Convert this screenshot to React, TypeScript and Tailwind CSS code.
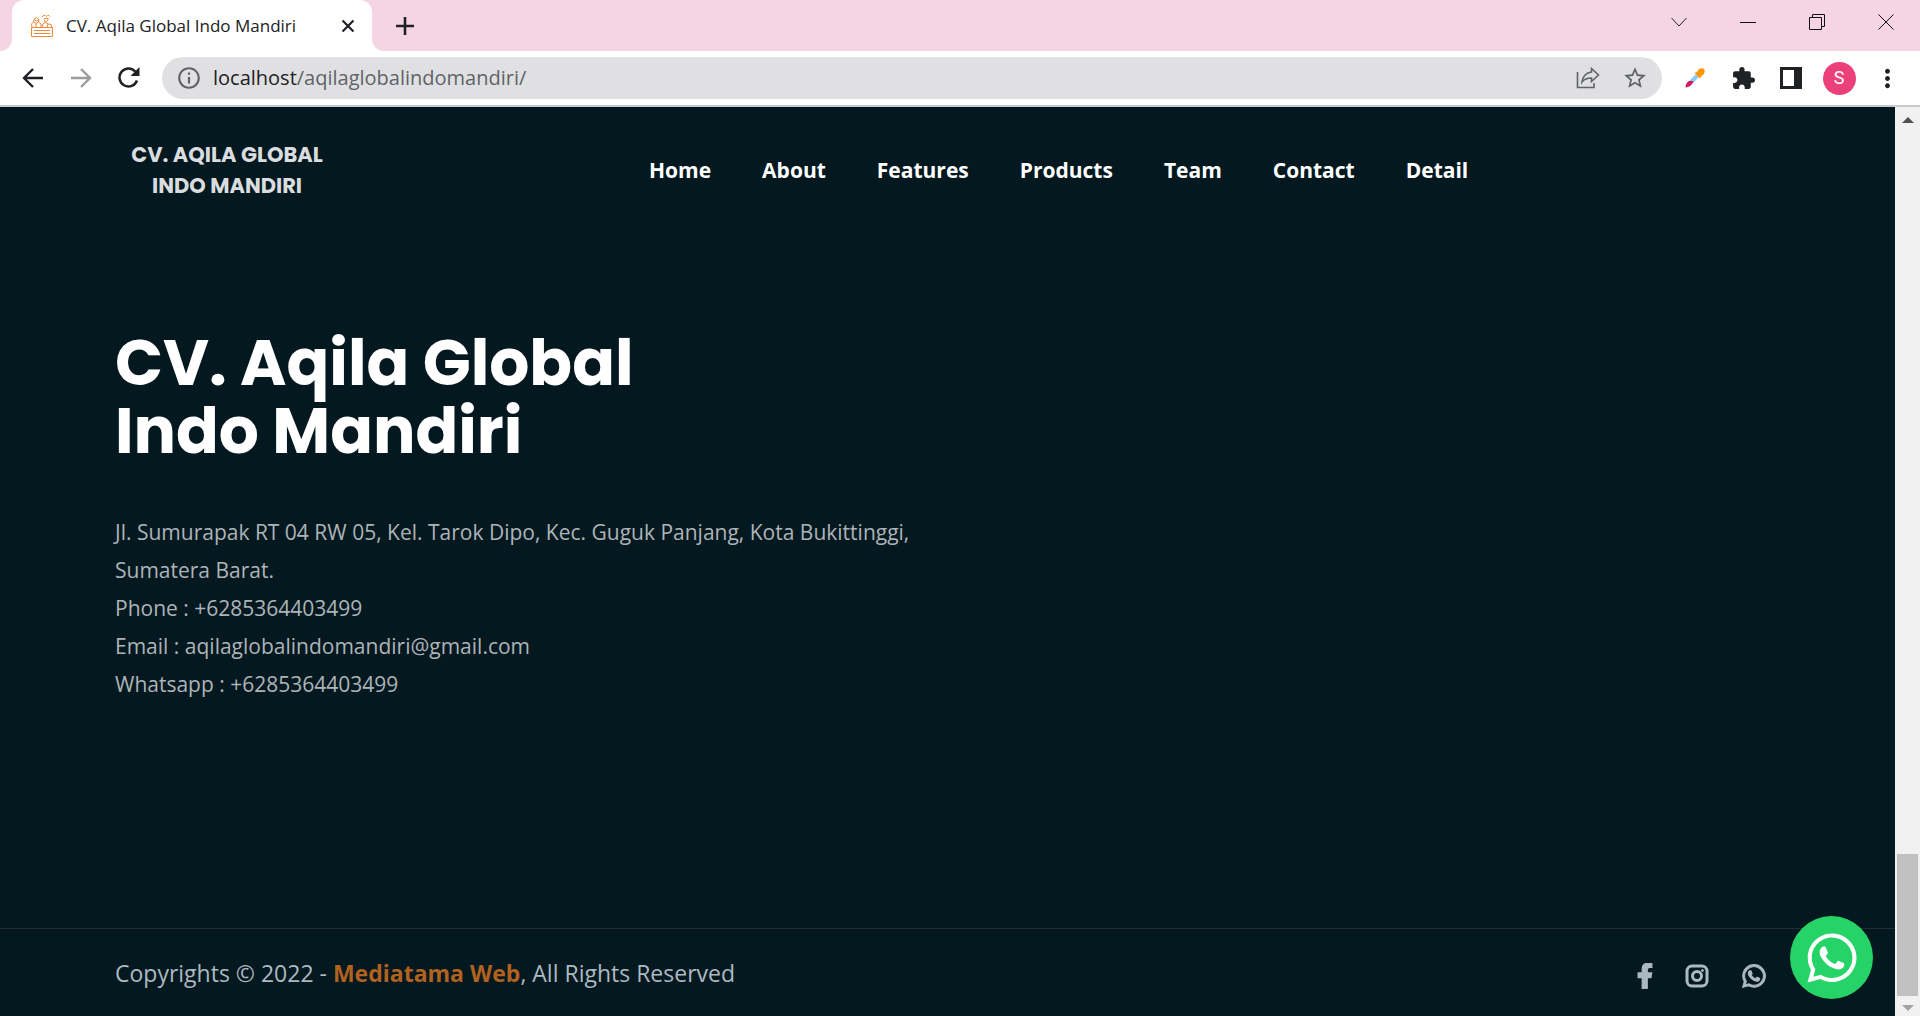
import React from "react";
import { FaFacebookF, FaWhatsapp } from "react-icons/fa";
import { MdExtension, MdStarBorder, MdMoreVert, MdOutlineInfo } from "react-icons/md";

const links = ["Home", "About", "Features", "Products", "Team", "Contact", "Detail"];

function CrateIcon() {
  return (
    <svg viewBox="0 0 24 24" className="size-6 shrink-0" fill="none" stroke="#f0883c" strokeWidth="1" aria-hidden="true">
      <path d="M1.500 13.500h21v9h-21zM4 16.500h16M4 19.500h16" />
      <path d="M2 13l-.5-3 2-2 2.500 1.500L8.500 8l2.500 2v3M6 9.500V13M3.500 8L4 5.500 6.500 3.500 9 5.500 8.500 8M4 5.500L6.500 7 9 5.500" />
      <path d="M12 13l1-3 2.500-1.500L18 10l3 .5 1 2.500M15.500 8.500L14 5.500M15.500 8.500L19 4.500M18 10l-1 3" />
      <path d="M12 3c1-2 3.500-2 4.500-.500C17.500 1 19 1 20 2.500M14 4.500h4" />
    </svg>
  );
}

function DropperIcon() {
  return (
    <svg viewBox="0 0 20 20" className="size-5" aria-hidden="true">
      <path d="M3 17L12 8" stroke="#90caf9" strokeWidth="4" strokeLinecap="round" />
      <path d="M.5 19.500c0-3 1.500-5.500 3.500-6.500h4.500c-1 3.500-4 6-8 6.500z" fill="#d81b60" />
      <path d="M9.500 5l5.500 5.500 1.500-2.500L18.500 6.500c1.500-2 1.500-4.500.5-5.500s-3.500-1-5.500.5L12 4z" fill="#ff9800" />
    </svg>
  );
}

function ShareIcon() {
  return (
    <svg viewBox="0 0 24 24" className="size-6" fill="none" stroke="currentColor" strokeWidth="1.600" aria-hidden="true">
      <path d="M1.500 6v15.500H18V17" />
      <path d="M15.500 2.500L22.500 9l-7 6.500V12c-4 0-7 .8-9.500 4 .5-5 4-9.500 9.500-10z" />
    </svg>
  );
}

function SidePanelIcon() {
  return (
    <svg viewBox="0 0 22 22" className="size-[22px]" aria-hidden="true">
      <path fill="#202124" fillRule="evenodd" d="M0 0h22v22H0zM3 3v16h11V3z" />
    </svg>
  );
}

function ArrowIcon({ flip = false }: { flip?: boolean }) {
  return (
    <svg viewBox="0 0 22 22" className="size-[22px]" fill="none" stroke="currentColor" strokeWidth="2.400" aria-hidden="true">
      <path d={flip ? "M1 11h19M11 2l9 9-9 9" : "M21 11H2M11 2l-9 9 9 9"} />
    </svg>
  );
}

function ReloadIcon() {
  return (
    <svg viewBox="0 0 22 22" className="size-[22px]" fill="none" stroke="currentColor" strokeWidth="2.500" aria-hidden="true">
      <path d="M19 13.500A9 9 0 1 1 17.500 4.800" />
      <path d="M21.500 0v9h-9z" fill="currentColor" stroke="none" />
    </svg>
  );
}

function InstagramIcon() {
  return (
    <svg viewBox="0 0 24 24" className="size-6" fill="none" stroke="currentColor" strokeWidth="3" aria-hidden="true">
      <rect x="2" y="2" width="20" height="20" rx="5" />
      <circle cx="12" cy="12" r="4.500" />
      <circle cx="17.500" cy="6.500" r="1" strokeWidth="1" fill="currentColor" />
    </svg>
  );
}

function TabStrip() {
  return (
    <div className="flex h-[51px] items-end bg-[#f5d4e3] text-[#202124]">
      <div className="size-3 bg-white">
        <div className="size-full rounded-br-xl bg-[#f5d4e3]" />
      </div>
      <div className="flex h-full w-[360px] items-center rounded-t-xl bg-white pr-3 pl-[18px]">
        <CrateIcon />
        <span className="ml-3 flex-1 truncate text-[17px]">CV. Aqila Global Indo Mandiri</span>
        <button aria-label="Close tab" className="grid size-6 place-items-center">
          <svg viewBox="0 0 12 12" className="size-3" fill="none" stroke="currentColor" strokeWidth="2.200"><path d="M.5.5l11 11M11.500.5l-11 11" /></svg>
        </button>
      </div>
      <div className="size-3 bg-white">
        <div className="size-full rounded-bl-xl bg-[#f5d4e3]" />
      </div>
      <button aria-label="New tab" className="grid h-full w-[42px] place-items-center">
        <svg viewBox="0 0 18 18" className="size-[18px]" fill="none" stroke="currentColor" strokeWidth="2.600"><path d="M9 0v18M0 9h18" /></svg>
      </button>
      <div className="ml-auto flex h-[43px] items-center self-start">
        <button aria-label="Search tabs" className="grid w-[69px] place-items-center">
          <svg viewBox="0 0 16 16" className="size-4" fill="none" stroke="#222"><path d="M.5 4L8 12l7.500-8" /></svg>
        </button>
        <button aria-label="Minimize" className="grid w-[69px] place-items-center">
          <svg viewBox="0 0 16 16" className="size-4" fill="none" stroke="#111"><path d="M0 8.500h16" /></svg>
        </button>
        <button aria-label="Restore" className="grid w-[69px] place-items-center">
          <svg viewBox="0 0 16 16" className="size-4" fill="none" stroke="#111"><path d="M.5 3.500h12v12H.5zM3.500 3.500v-3h12v12h-3" /></svg>
        </button>
        <button aria-label="Close window" className="grid w-[69px] place-items-center">
          <svg viewBox="0 0 16 16" className="size-4" fill="none" stroke="#111"><path d="M.5.5l15 15M15.500.5l-15 15" /></svg>
        </button>
      </div>
    </div>
  );
}

function Toolbar() {
  return (
    <div className="flex h-14 items-center gap-[9px] border-b-2 border-[#c8c9cb] bg-white px-[9px] text-[#202124]">
      <div className="flex">
        <button aria-label="Back" className="grid w-12 place-items-center"><ArrowIcon /></button>
        <button aria-label="Forward" className="grid w-12 place-items-center text-[#9b9c9e]"><ArrowIcon flip /></button>
        <button aria-label="Reload" className="grid w-12 place-items-center"><ReloadIcon /></button>
      </div>
      <div className="flex h-[42px] flex-1 items-center rounded-full bg-[#e0e0e2] px-[14px] text-[#5f6368]">
        <MdOutlineInfo className="size-[26px]" />
        <a href="#" className="ml-[11px] flex-1 text-xl"><span className="text-[#202124]">localhost</span>/aqilaglobalindomandiri/</a>
        <button aria-label="Share"><ShareIcon /></button>
        <button aria-label="Bookmark" className="ml-[22px]"><MdStarBorder className="size-[26px]" /></button>
      </div>
      <div className="flex items-center">
        <button aria-label="Color picker" className="grid w-12 place-items-center"><DropperIcon /></button>
        <button aria-label="Extensions" className="grid w-12 place-items-center"><MdExtension className="size-[25px]" /></button>
        <button aria-label="Side panel" className="grid w-12 place-items-center"><SidePanelIcon /></button>
        <button aria-label="Profile" className="grid w-12 place-items-center">
          <span className="grid size-[33px] place-items-center rounded-full bg-[#ec407a] font-[Roboto,sans-serif] text-lg text-white">S</span>
        </button>
        <button aria-label="Menu" className="grid w-12 place-items-center"><MdMoreVert className="size-[29px]" /></button>
      </div>
    </div>
  );
}

function ScrollBar() {
  return (
    <div className="flex w-[25px] shrink-0 flex-col items-center bg-[#f1f1f1]" aria-hidden="true">
      <svg viewBox="0 0 12 6" className="mt-2.5 h-1.5 w-3" fill="#505050"><path d="M0 6l6-6 6 6z" /></svg>
      <div className="flex-1" />
      <div className="h-[142px] w-[21px] bg-[#c1c1c1]" />
      <svg viewBox="0 0 12 6" className="mt-[9px] mb-[5px] h-1.5 w-3" fill="#a3a3a3"><path d="M0 0l6 6 6-6z" /></svg>
    </div>
  );
}

export default function App() {
  return (
    <div className="flex min-h-screen flex-col bg-[#041820] font-['Open_Sans','Noto_Sans',sans-serif]">
      <TabStrip />
      <Toolbar />
      <div className="flex flex-1">
        <div className="flex min-w-0 flex-1 flex-col">
          <header className="flex items-center pt-8 pl-[115px] text-[#d9dddf]">
            <a href="#" className="w-[224px] text-center font-[Poppins,Inter,sans-serif] text-[21px] leading-[31px] font-bold">CV. AQILA GLOBAL<br />INDO MANDIRI</a>
            <nav className="ml-[310px] flex gap-[51px] pt-0.5 text-[21px] font-bold text-white">
              {links.map((l) => <a key={l} href="#">{l}</a>)}
            </nav>
          </header>
          <main className="flex-1 pt-32 pl-[115px]">
            <h1 className="font-[Poppins,Inter,sans-serif] text-[63px] leading-[68px] font-bold text-white">CV. Aqila Global<br />Indo Mandiri</h1>
            <address className="mt-12 text-[21px] leading-[38px] text-[#adb4b8] not-italic">
              Jl. Sumurapak RT 04 RW 05, Kel. Tarok Dipo, Kec. Guguk Panjang, Kota Bukittinggi,<br />
              Sumatera Barat.<br />
              Phone : +6285364403499<br />
              Email : aqilaglobalindomandiri@gmail.com<br />
              Whatsapp : +6285364403499
            </address>
          </main>
          <footer className="flex h-[88px] items-center justify-between border-t border-[#222e34] pr-32 pl-[115px] text-[#adb9c0]">
            <p className="pt-0.5 text-[23px]">Copyrights © 2022 - <a href="#" className="font-bold text-[#b1621f]">Mediatama Web</a>, All Rights Reserved</p>
            <div className="mt-1.5 flex items-center gap-8">
              <a href="#" aria-label="Facebook"><FaFacebookF className="h-[26px] w-4" stroke="currentColor" strokeWidth="24" /></a>
              <a href="#" aria-label="Instagram"><InstagramIcon /></a>
              <a href="#" aria-label="WhatsApp"><FaWhatsapp className="size-[26px]" stroke="currentColor" strokeWidth="20" /></a>
            </div>
          </footer>
        </div>
        <ScrollBar />
      </div>
      <a href="#" aria-label="Chat on WhatsApp" className="fixed right-[47px] bottom-[17px] grid size-[83px] place-items-center rounded-full bg-[#25d366] text-white">
        <FaWhatsapp className="size-14" />
      </a>
    </div>
  );
}
